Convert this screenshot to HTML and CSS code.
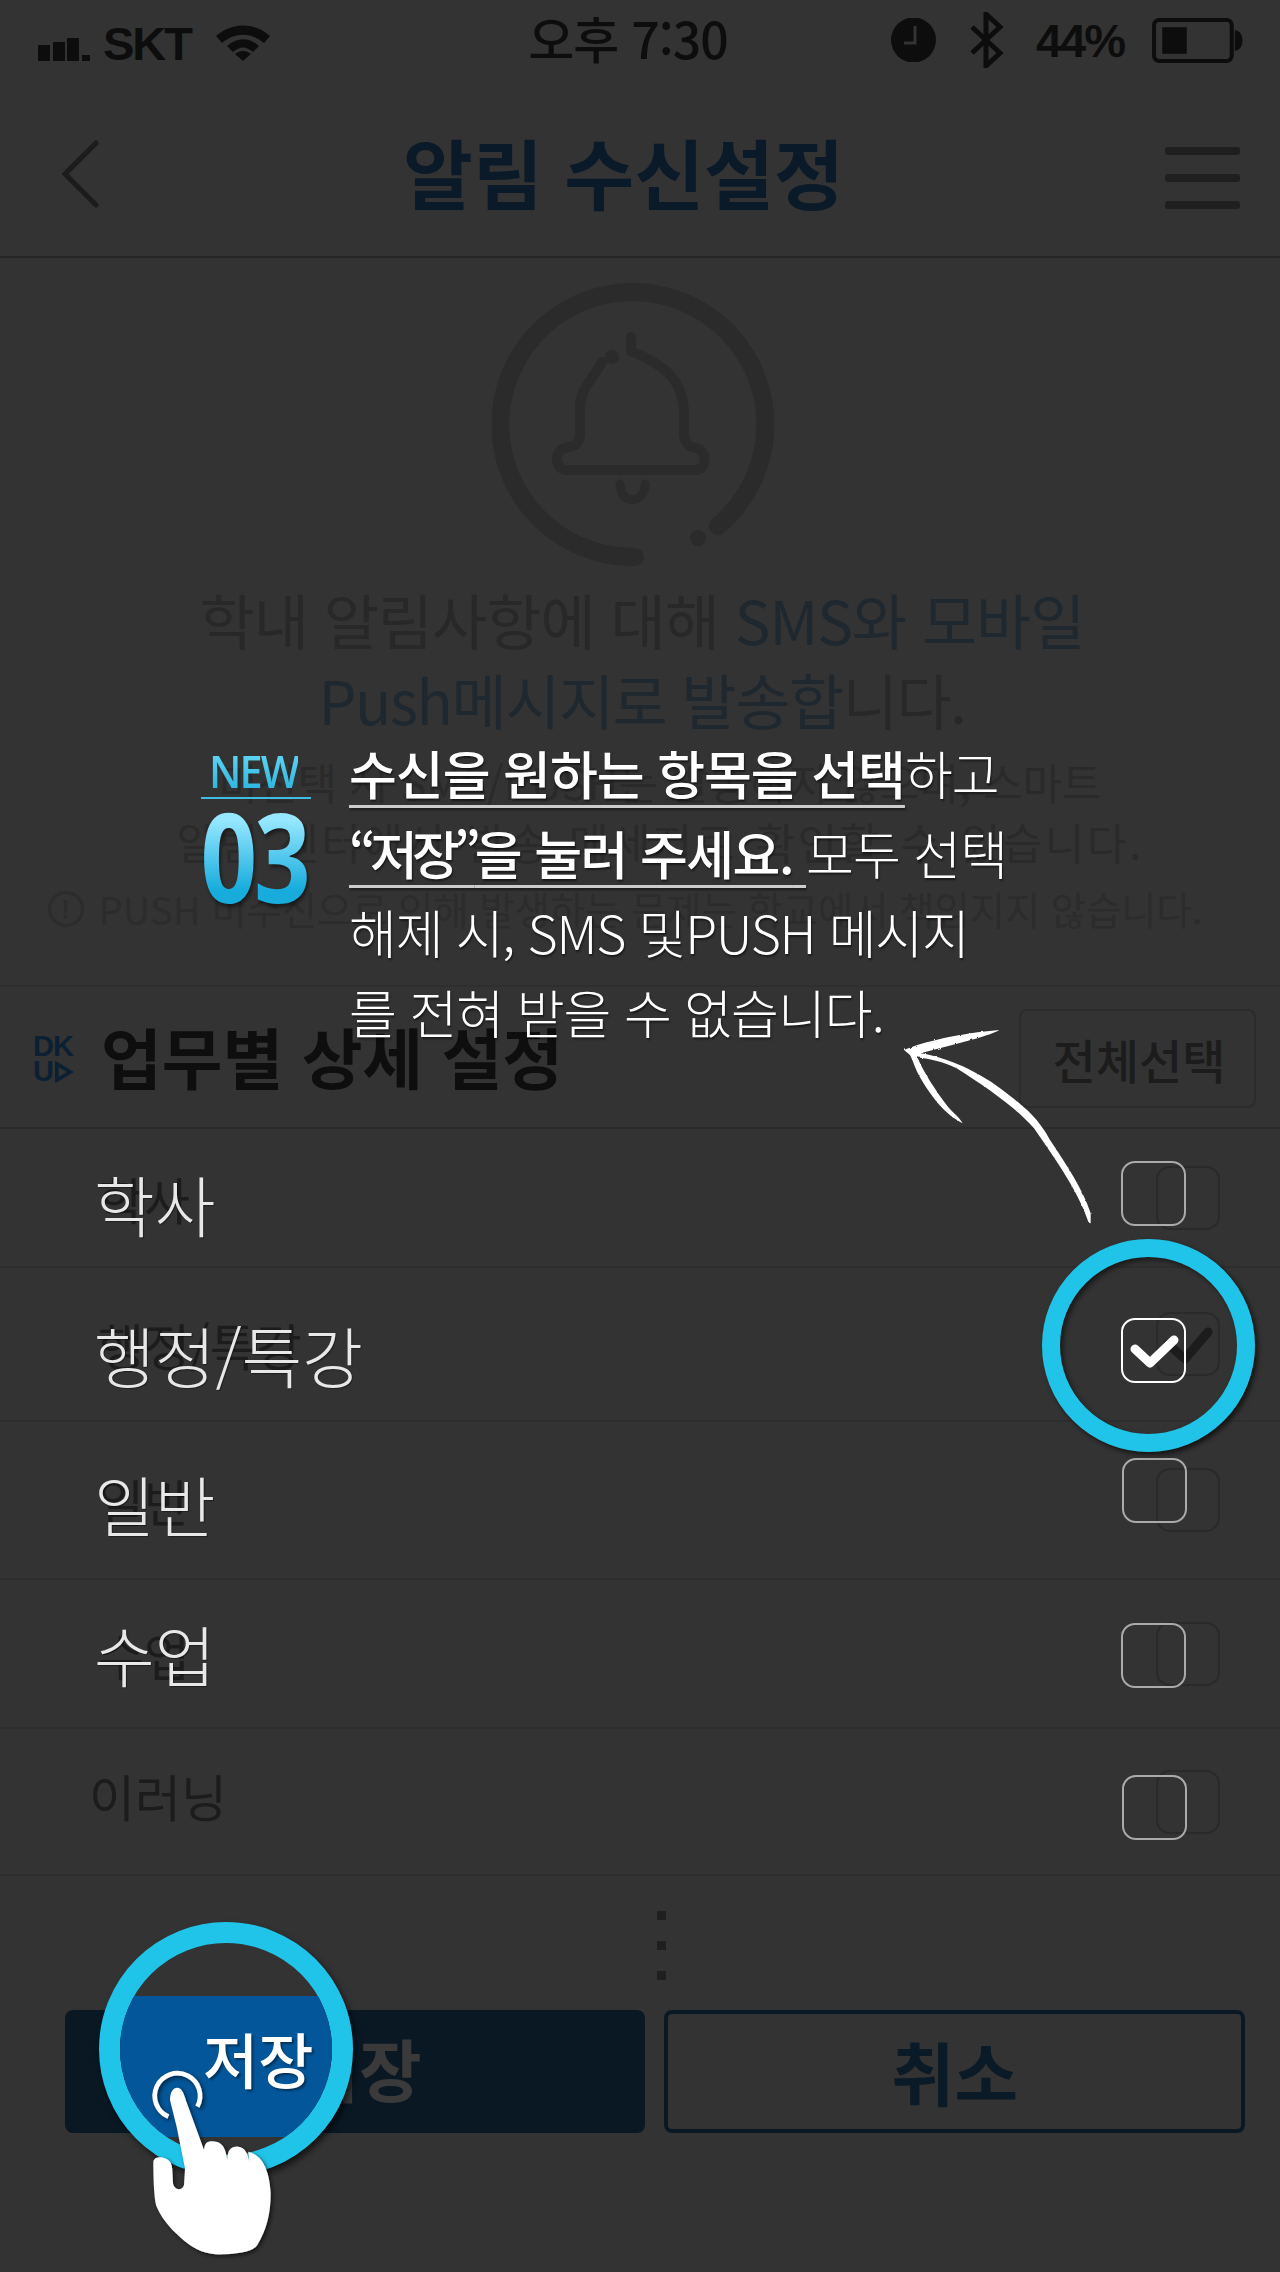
FILE: index.html
```html
<!DOCTYPE html>
<html lang="ko">
<head>
<meta charset="utf-8">
<title>알림 수신설정</title>
<link rel="stylesheet" href="styles.css">
</head>
<body>
<main class="app">
  <header class="status">
    <div class="status-left">
      <svg class="signal" viewBox="0 0 52 23"><rect x="0" y="7" width="12" height="16"/><rect x="15" y="4" width="12" height="19"/><rect x="29" y="0" width="12" height="23"/><rect x="44" y="17" width="8" height="6"/></svg>
      <span class="st-text">SKT</span>
      <svg class="wifi" viewBox="0 0 54 36"><path d="M0 11 C16 -3 38 -3 54 11 L48 18 C35 7 19 7 6 18Z"/><path d="M11 21 C21 12 33 12 43 21 L37 27 C30 21 24 21 17 27Z"/><path d="M27 36 L19 29 C24 25 30 25 35 29Z"/></svg>
    </div>
    <span class="st-time">오후 7:30</span>
    <div class="status-right">
      <svg class="clock" viewBox="0 0 45 44"><circle cx="22.500" cy="22" r="22.500"/><path d="M24 8 V25 H13" fill="none" stroke="#333" stroke-width="3"/></svg>
      <svg class="bt" viewBox="0 0 36 56"><path d="M3 15 L31 41 L17 54 V2 L31 15 L3 41" fill="none" stroke="#0d0d0d" stroke-width="5"/></svg>
      <span class="st-text st-batt">44%</span>
      <svg class="battery" viewBox="0 0 90 44"><rect x="2" y="2" width="76" height="40" rx="5" fill="none" stroke="#0d0d0d" stroke-width="4"/><rect x="10" y="9" width="24" height="26" fill="#0d0d0d"/><path d="M81 12 C91 12 91 32 81 32Z" fill="#0d0d0d"/></svg>
    </div>
  </header>

  <nav class="nav">
    <svg class="back" viewBox="0 0 38 68"><path d="M35 3 L4 34 L35 65" fill="none" stroke="#1c1c1c" stroke-width="5" stroke-linecap="round"/></svg>
    <h1 class="nav-title">알림 수신설정</h1>
    <div class="menu"><i></i><i></i><i></i></div>
  </nav>

  <section class="hero">
    <svg class="bell" viewBox="0 0 283 283">
      <g fill="none" stroke="#2b2b2b" stroke-linecap="round">
        <path stroke-width="18" d="M143 274 A132.500 132.500 0 1 1 226 243"/>
        <path stroke-width="10" d="M139 54 V68 C172 82 190 95 192 128 V150 C192 162 198 164 204 165 C215 168 216 184 205 187 H73 C62 184 62 168 73 165 C82 163 88 162 88 150 V125 C88 105 100 98 110 79"/>
        <path stroke-width="9" d="M128 201 C128 222 153 222 153 201"/>
      </g>
      <circle cx="120" cy="74" r="7" fill="#2b2b2b"/>
      <circle cx="206" cy="255" r="8" fill="#2b2b2b"/>
    </svg>
    <p class="lead">학내 알림사항에 대해 <span class="lead-blue">SMS와 모바일</span><br><span class="lead-line2"><span class="lead-blue">Push메시지로 발송합</span>니다.</span></p>
    <p class="sub"><span class="sub-a">미선택 시 SMS/PUSH는 발송하지 않으며, 스마트</span><br><span class="sub-b">알림 센터에서 발송 메세지로 확인할 수 있습니다.</span></p>
    <p class="warn"><span class="warn-icon">!</span>PUSH 미수신으로 인해 발생하는 문제는 학교에서 책임지지 않습니다.</p>
  </section>

  <section class="detail">
    <div class="detail-head">
      <div class="dku"><span>DK</span><span>U<svg class="dku-tri" viewBox="0 0 20 24"><path d="M2 3 L17 12 L2 21Z" fill="none" stroke="#0c2033" stroke-width="4"/></svg></span></div>
      <h2 class="detail-title">업무별 상세 설정</h2>
      <button class="all-btn">전체선택</button>
    </div>
    <ul class="rows">
      <li class="row row-a"><span class="row-label">학사</span><span class="box"></span></li>
      <li class="row row-b"><span class="row-label">행정/특강</span><span class="box"><svg viewBox="0 0 64 64"><path d="M12 32 L29 47 L52 20" fill="none" stroke="#1c1c1c" stroke-width="9" stroke-linecap="round" stroke-linejoin="round"/></svg></span></li>
      <li class="row row-c"><span class="row-label">일반</span><span class="box"></span></li>
      <li class="row row-d"><span class="row-label">수업</span><span class="box"></span></li>
      <li class="row row-e"><span class="row-label">이러닝</span><span class="box"></span></li>
    </ul>
  </section>

  <div class="dots"><i></i><i></i><i></i></div>

  <div class="actions">
    <button class="btn btn-save">저장</button>
    <button class="btn btn-cancel">취소</button>
  </div>
</main>

<aside class="guide">
  <div class="badge">
    <span class="badge-new"><span class="badge-new-text">NEW</span></span>
    <span class="badge-num">03</span>
  </div>
  <p class="guide-text"><span class="u1"><b>수신을 원하는 항목을 선택</b></span>하고<br><span class="u2"><b><span class="quote">“저장”</span>을 눌러 주세요.</b> </span>모두 선택<br><span class="line3">해제 시, SMS 및PUSH 메시지</span><br>를 전혀 받을 수 없습니다.</p>

  <svg class="arrow" viewBox="0 0 1200 1440">
    <defs><filter id="rough" x="-5%" y="-5%" width="110%" height="110%"><feTurbulence type="fractalNoise" baseFrequency="0.09" numOctaves="2" seed="4"/><feDisplacementMap in="SourceGraphic" scale="7"/></filter></defs>
    <g fill="#fff" filter="url(#rough)">
      <path d="M72 150 C130 125 240 100 358 90 C320 112 210 135 122 160 C200 172 300 215 380 280 C420 312 470 345 510 420 C560 495 610 570 632 640 L632 670 L626 668 C600 590 550 510 462 385 C410 325 320 262 230 205 C190 185 150 178 112 172 C130 215 165 270 205 322 C220 340 235 348 248 370 C210 350 170 318 120 232 C105 205 100 185 90 165Z"/>
    </g>
  </svg>

  <span class="obox obox-a"></span>
  <span class="obox obox-b"><svg viewBox="0 0 65 65"><path d="M14 31 L29 45 L53 22" fill="none" stroke="#fff" stroke-width="9" stroke-linecap="round" stroke-linejoin="round"/></svg></span>
  <span class="obox obox-c"></span>
  <span class="obox obox-d"></span>
  <span class="obox obox-e"></span>
  <span class="ring ring-check"></span>

  <span class="olabel olabel-a">학사</span>
  <span class="olabel olabel-b">행정/특강</span>
  <span class="olabel olabel-c">일반</span>
  <span class="olabel olabel-d">수업</span>

  <div class="focus">
    <div class="focus-fill"><span class="focus-text">저장</span></div>
  </div>
  <svg class="hand" viewBox="0 0 1500 1236">
    <defs><filter id="sh" x="-20%" y="-20%" width="140%" height="140%"><feDropShadow dx="6" dy="6" stdDeviation="6" flood-color="#000" flood-opacity=".6"/></filter></defs>
    <path class="touch" d="M505 770 A68 68 0 1 1 592 740" filter="url(#sh)"/>
    <path fill="#fff" filter="url(#sh)" d="M510 720 C510 695 520 683 532 683 C545 683 552 700 558 722 L612 870 C614 850 620 843 640 844 C665 846 676 860 682 900 C682 868 695 858 715 860 C735 862 743 880 748 905 L745 875 C785 885 808 925 812 1000 C812 1060 800 1110 772 1155 C760 1172 730 1180 670 1183 C620 1185 590 1170 560 1148 C520 1115 490 1085 470 1040 C462 1020 460 950 460 905 C462 893 475 890 490 893 C510 898 516 910 517 930 L519 970 C522 990 545 995 552 975 L555 925 L530 800Z"/>
  </svg>
</aside>
</body>
</html>
```

FILE: styles.css
```css
* { box-sizing: border-box; }
html, body { margin: 0; padding: 0; }
body {
  width: 1280px;
  height: 2272px;
  position: relative;
  overflow: hidden;
  background: #333;
  font-family: "Noto Sans CJK KR", "Liberation Sans", sans-serif;
  color: #1c1c1c;
}
h1, h2, p, ul { margin: 0; padding: 0; list-style: none; }
button { font-family: inherit; background: none; padding: 0; }

.app { width: 1280px; height: 2272px; display: flex; flex-direction: column; }

/* status bar */
.status {
  height: 84px;
  display: grid;
  grid-template-columns: 1fr auto 1fr;
  align-items: center;
  padding: 0 36px 0 38px;
  color: #0d0d0d;
}
.status-left, .status-right { display: flex; align-items: center; }
.status-left { margin-top: 2px; }
.status-right { justify-content: flex-end; margin-top: -4px; }
.signal { width: 52px; height: 23px; fill: #0d0d0d; margin-top: 12px; }
.wifi { width: 54px; height: 36px; fill: #0d0d0d; margin-left: 25px; }
.st-text { font: 700 47px/1 "Liberation Sans", sans-serif; margin-left: 13px; letter-spacing: -2px; }
.st-time { font-size: 50px; line-height: 1; font-weight: 500; letter-spacing: -1px; margin: -10px 0 0 -26px; }
.clock { width: 45px; height: 44px; fill: #0d0d0d; }
.bt { width: 36px; height: 56px; margin-left: 33px; }
.st-batt { margin-left: 31px; }
.battery { width: 92px; height: 45px; margin-left: 28px; }

/* nav */
.nav {
  height: 174px;
  display: grid;
  grid-template-columns: 1fr auto 1fr;
  align-items: center;
  padding: 8px 40px 0 61px;
  border-bottom: 2px solid #252525;
}
.back { width: 38px; height: 68px; }
.nav-title { font-size: 76px; line-height: 1; font-weight: 700; color: #0a1a28; margin: -6px 0 0 -54px; }
.menu { justify-self: end; display: flex; flex-direction: column; gap: 19px; margin-top: 8px; }
.menu i { display: block; width: 75px; height: 8px; border-radius: 3px; background: #1f1f1f; }

/* hero */
.hero {
  height: 729px;
  padding-top: 25px;
  display: flex;
  flex-direction: column;
  align-items: center;
  border-bottom: 2px solid #2e2e2e;
}
.bell { width: 283px; height: 283px; margin-left: -14px; }
.lead { font-size: 60px; line-height: 80px; text-align: center; color: #282828; margin-top: 13px; margin-left: 4px; letter-spacing: -1px; }
.lead-line2 { letter-spacing: -1.500px; }
.lead-blue { color: #1f282f; }
.sub { font-size: 43px; line-height: 60px; text-align: center; color: #2a2a2a; margin: 12px 0 0 40px; }
.sub-b { letter-spacing: 2.500px; word-spacing: 4px; }
.warn { font-size: 38.300px; line-height: 60px; color: #2c2c2c; display: flex; align-items: center; gap: 15px; margin: 8px 0 0 -30px; }
.warn-icon { width: 36px; height: 36px; border: 3px solid #2c2c2c; border-radius: 50%; font: 700 26px/30px "Liberation Sans", sans-serif; text-align: center; }

/* detail */
.detail-head {
  height: 142px;
  display: flex;
  align-items: center;
  padding: 0 24px 0 33px;
  border-bottom: 2px solid #2b2b2b;
}
.dku { width: 40px; margin-top: 4px; display: flex; flex-direction: column; font: 700 29px/25px "Liberation Sans", sans-serif; letter-spacing: -1px; color: #0c2033; }
.dku span { display: flex; align-items: center; }
.dku-tri { width: 18px; height: 22px; margin-left: 2px; }
.detail-title { font-size: 66px; line-height: 1; font-weight: 700; color: #0e0e0e; margin: -4px 0 0 28px; flex: 1; }
.all-btn { width: 237px; height: 99px; margin-top: 2px; border: 2px solid #2b2b2b; border-radius: 8px; padding-left: 3px; font-size: 47px; font-weight: 500; color: #1c1c1c; }

.row {
  display: flex;
  align-items: center;
  justify-content: space-between;
  padding: 0 60px 0 98px;
  border-bottom: 2px solid #2e2e2e;
}
.row-a { height: 139px; }
.row-b { height: 154px; }
.row-c { height: 158px; }
.row-d { height: 149px; }
.row-e { height: 147px; }
.row-label { font-size: 50px; line-height: 1; color: #1c1c1c; }
.row-e .row-label { margin: -13px 0 0 -9px; }
.box { position: relative; width: 64px; height: 64px; border: 2px solid #2a2a2a; border-radius: 14px; }
.box svg { position: absolute; inset: -2px; width: 64px; height: 64px; }

.dots { height: 134px; padding-top: 35px; display: flex; flex-direction: column; gap: 21px; margin-left: 657px; }
.dots i { display: block; width: 9px; height: 9px; background: #1f1f1f; }

.actions { display: grid; grid-template-columns: 580px 581px; gap: 19px; padding-left: 65px; }
.btn { height: 123px; border-radius: 8px; font-size: 68px; line-height: 1; font-weight: 700; border: 4px solid #0a1824; }
.btn-save { background: #0a1824; color: #3a3a3a; padding: 0 0 7px 8px; }
.btn-cancel { color: #0a1a26; font-size: 69px; }

/* overlay guide */
.guide { position: absolute; inset: 0; pointer-events: none; }
.badge { position: absolute; left: 201px; top: 745px; width: 110px; display: flex; flex-direction: column; align-items: center; }
.badge-new {
  width: 100%;
  text-align: center;
  border-bottom: 2px solid #3ebde0;
  font: 600 45px/52px "Open Sans", sans-serif;
  letter-spacing: -2px;
}
.badge-new-text {
  display: inline-block;
  margin-left: -6px;
  transform: scaleX(.92);
  background: linear-gradient(#6adcf8, #24b0dc);
  -webkit-background-clip: text;
  background-clip: text;
  color: transparent;
}
.badge-num {
  font: 700 124px/100px "Open Sans", sans-serif;
  letter-spacing: -4px;
  margin: 6px 0 0 -4px;
  transform: scaleX(.8);
  background: linear-gradient(#96e7ff 15%, #17acdc 85%);
  -webkit-background-clip: text;
  background-clip: text;
  color: transparent;
  filter: drop-shadow(2px 3px 2px rgba(0, 0, 0, .5));
}
.guide-text {
  position: absolute;
  left: 349px;
  top: 733px;
  width: 700px;
  font-size: 52px;
  line-height: 79.500px;
  font-weight: 300;
  color: #fff;
  letter-spacing: -1px;
  text-shadow: 1px 2px 2px rgba(0, 0, 0, .5);
}
.guide-text b { font-weight: 500; }
.quote { letter-spacing: -6px; }
.line3 { letter-spacing: -1.200px; }
.u1, .u2 { text-decoration: underline; text-decoration-thickness: 3px; text-underline-offset: 10px; text-decoration-color: #ccc; }
.u2 { letter-spacing: -1.500px; }

.arrow { position: absolute; left: 880px; top: 1000px; width: 400px; height: 480px; }
.obox { position: absolute; width: 65px; height: 65px; border: 2px solid #aaa; border-radius: 14px; }
.obox svg { position: absolute; inset: -2px; width: 65px; height: 65px; }
.obox-a { left: 1121px; top: 1161px; }
.obox-b { left: 1121px; top: 1318px; border-color: #fff; }
.obox-c { left: 1122px; top: 1458px; }
.obox-d { left: 1121px; top: 1623px; }
.obox-e { left: 1122px; top: 1775px; }
.ring { position: absolute; border-radius: 50%; box-shadow: 3px 3px 5px rgba(0, 0, 0, .6), inset 3px 3px 5px rgba(0, 0, 0, .5); }
.ring-check { left: 1042px; top: 1239px; width: 213px; height: 213px; border: 18px solid #20c4e8; }
.olabel { position: absolute; left: 94px; font-size: 66px; line-height: 1; font-weight: 300; color: #e8e8e8; text-shadow: 1px 1px 1px rgba(0, 0, 0, .4); }
.olabel-a { top: 1170px; }
.olabel-b { top: 1321px; }
.olabel-c { top: 1470px; }
.olabel-d { top: 1620px; }

.focus { position: absolute; left: 99px; top: 1922px; width: 254px; height: 254px; border-radius: 50%; border: 21px solid #20c4e8; overflow: hidden; box-shadow: 3px 4px 6px rgba(0, 0, 0, .6); }
.focus-fill { position: absolute; left: -21px; right: -21px; top: 53px; height: 141px; background: #035699; }
.focus-text { position: absolute; left: 104px; top: 20px; font-size: 60px; line-height: 1.400; font-weight: 500; color: #fff; text-shadow: 2px 2px 2px rgba(0, 0, 0, .4); }
.hand { position: absolute; left: 0; top: 1860px; width: 500px; height: 412px; }
.touch { fill: none; stroke: #fff; stroke-width: 14px; }
```
